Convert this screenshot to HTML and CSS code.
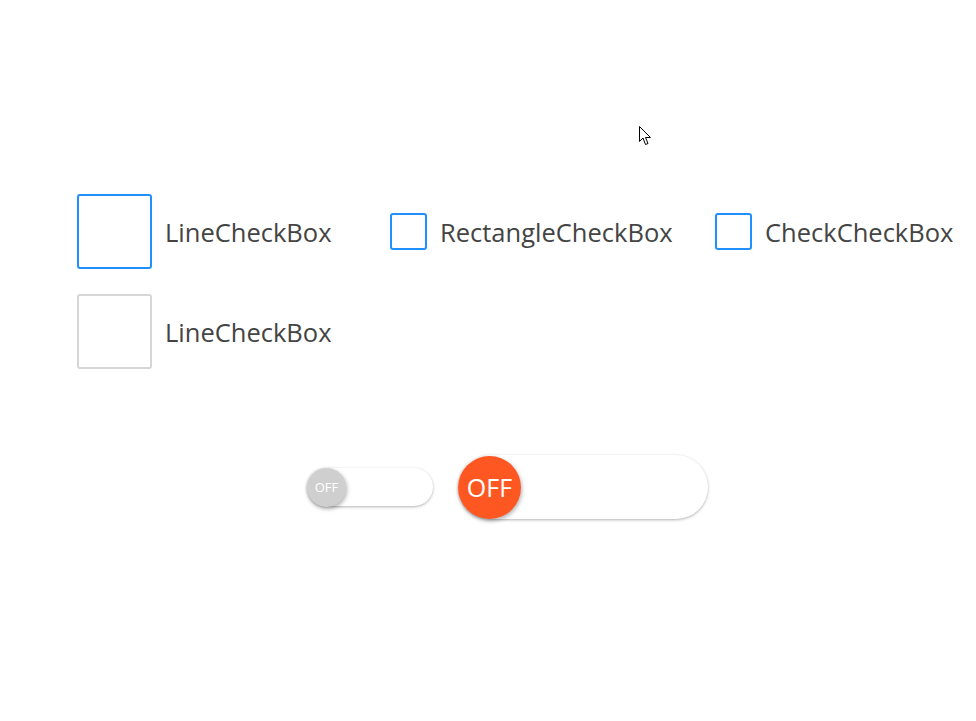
FILE: index.html
```html
<!DOCTYPE html>
<html>
<head>
<meta charset="utf-8">
<link rel="stylesheet" href="styles.css">
</head>
<body>
<div class="page">
  <div class="checks">
    <div class="row">
      <label class="item col1"><span class="box big blue"></span><span class="label">LineCheckBox</span></label>
      <label class="item col2"><span class="box small blue"></span><span class="label">RectangleCheckBox</span></label>
      <label class="item col3"><span class="box small blue"></span><span class="label">CheckCheckBox</span></label>
    </div>
    <div class="row">
      <label class="item col1"><span class="box big gray"></span><span class="label">LineCheckBox</span></label>
    </div>
  </div>
  <div class="toggles">
    <div class="switch sw-small"><span class="knob knob-small">OFF</span></div>
    <div class="switch sw-large"><span class="knob knob-large">OFF</span></div>
  </div>
  <svg class="cursor" width="12" height="20" viewBox="0 0 12 20"><path d="M0.5 0.5 L0.5 15.5 L4 12 L6.5 18.5 L9 17.5 L6.5 11.5 L11.5 11.5 Z" fill="#fff" stroke="#000" stroke-width="1"/></svg>
</div>
</body>
</html>
```
FILE: styles.css
```css
html, body { margin: 0; padding: 0; background: #fff; }
.page {
  position: relative;
  width: 976px;
  height: 721px;
  font-family: "Open Sans", "Noto Sans", sans-serif;
  color: #444;
}
.checks {
  padding-top: 194px;
  padding-left: 77px;
  display: flex;
  flex-direction: column;
  gap: 25px;
}
.row { display: flex; align-items: center; }
.item { display: flex; align-items: center; }
.col1 { width: 313px; }
.col2 { width: 325px; }
.box { box-sizing: border-box; display: inline-block; background: #fff; }
.big { width: 75px; height: 75px; border-radius: 3px; margin-right: 13px; }
.small { width: 37px; height: 37px; border-radius: 3px; margin-right: 13px; }
.blue { border: 2px solid #2090ff; }
.gray { border: 2px solid #d6d6d6; }
.label { font-size: 25.5px; letter-spacing: 0; }
.toggles {
  margin-top: 86px;
  padding-left: 307px;
  display: flex;
  align-items: center;
  gap: 25px;
}
.switch {
  position: relative;
  background: #fff;
  border-radius: 999px;
  box-shadow: 0 1px 3px rgba(0,0,0,0.3);
  display: flex;
  align-items: center;
}
.sw-small { width: 126px; height: 38px; }
.sw-large { width: 250px; height: 64px; }
.knob {
  border-radius: 50%;
  color: #fff;
  display: flex;
  align-items: center;
  justify-content: center;
  font-family: "Open Sans", sans-serif;
}
.knob-small {
  width: 39px; height: 39px;
  background: #cfcfcf;
  font-size: 13px;
  box-shadow: 1px 2px 4px rgba(0,0,0,0.3);
}
.knob-large {
  width: 63px; height: 63px;
  background: #ff5722;
  font-size: 25px;
  box-shadow: 1px 2px 4px rgba(0,0,0,0.3);
}
.cursor { position: absolute; left: 639px; top: 126px; }
```
